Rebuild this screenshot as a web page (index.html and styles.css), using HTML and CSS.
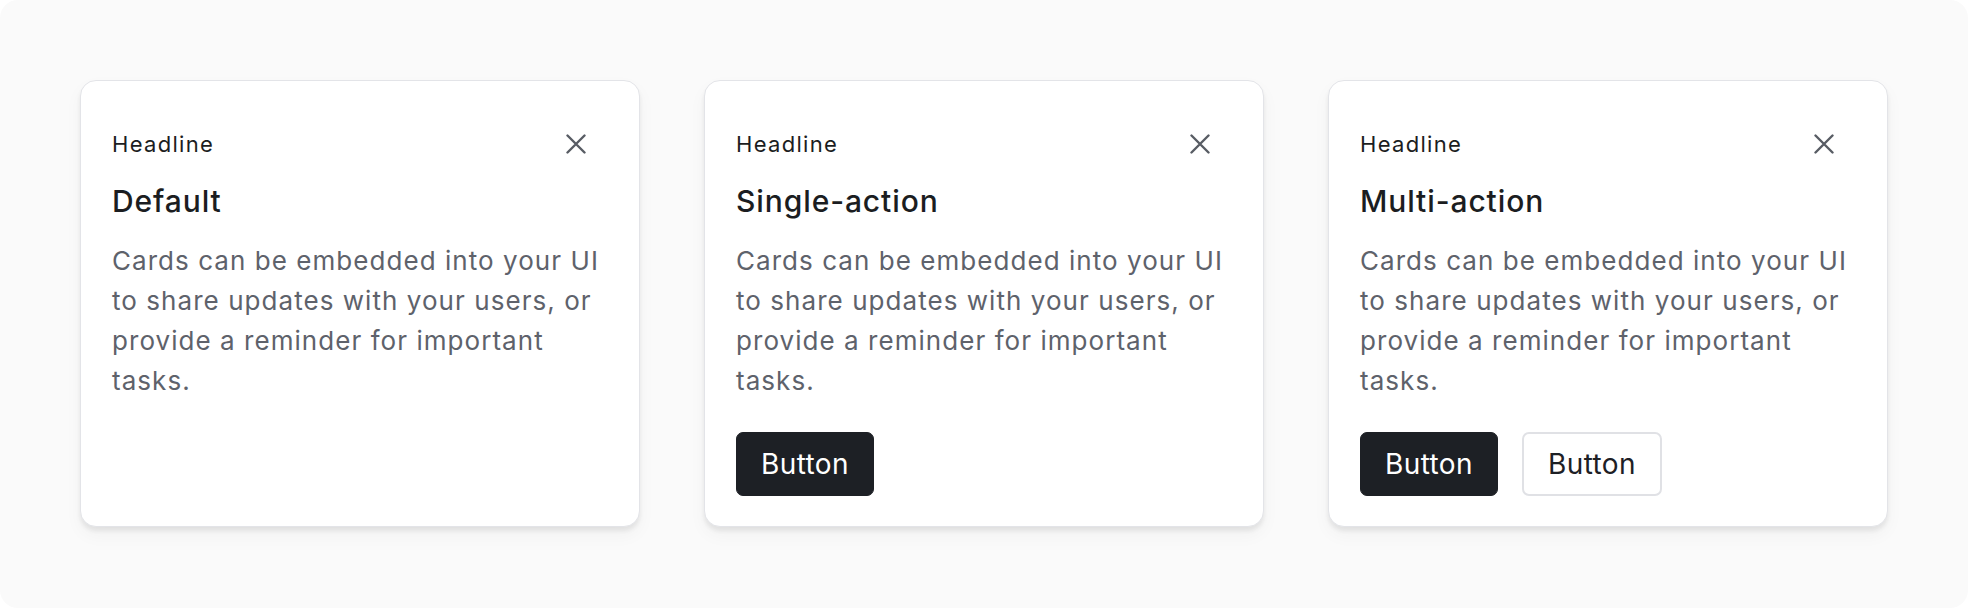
FILE: index.html
```html
<!DOCTYPE html>
<html lang="en">
<head>
<meta charset="utf-8">
<title>Cards</title>
<link rel="stylesheet" href="styles.css">
</head>
<body>
<main class="canvas">
  <section class="card">
    <div class="card-header">
      <span class="eyebrow">Headline</span>
      <button class="close" aria-label="Close">
        <svg viewBox="0 0 20 20" width="20" height="20"><path d="M1.5 1.5 L18.5 18.5 M18.5 1.5 L1.5 18.5" stroke="currentColor" stroke-width="2.4" stroke-linecap="round" fill="none"/></svg>
      </button>
    </div>
    <h2 class="title">Default</h2>
    <p class="body">Cards can be embedded into your UI to share updates with your users, or provide a reminder for important tasks.</p>
  </section>
  <section class="card">
    <div class="card-header">
      <span class="eyebrow">Headline</span>
      <button class="close" aria-label="Close">
        <svg viewBox="0 0 20 20" width="20" height="20"><path d="M1.5 1.5 L18.5 18.5 M18.5 1.5 L1.5 18.5" stroke="currentColor" stroke-width="2.4" stroke-linecap="round" fill="none"/></svg>
      </button>
    </div>
    <h2 class="title">Single-action</h2>
    <p class="body">Cards can be embedded into your UI to share updates with your users, or provide a reminder for important tasks.</p>
    <div class="actions">
      <button class="btn btn-primary">Button</button>
    </div>
  </section>
  <section class="card">
    <div class="card-header">
      <span class="eyebrow">Headline</span>
      <button class="close" aria-label="Close">
        <svg viewBox="0 0 20 20" width="20" height="20"><path d="M1.5 1.5 L18.5 18.5 M18.5 1.5 L1.5 18.5" stroke="currentColor" stroke-width="2.4" stroke-linecap="round" fill="none"/></svg>
      </button>
    </div>
    <h2 class="title">Multi-action</h2>
    <p class="body">Cards can be embedded into your UI to share updates with your users, or provide a reminder for important tasks.</p>
    <div class="actions">
      <button class="btn btn-primary">Button</button>
      <button class="btn btn-secondary">Button</button>
    </div>
  </section>
</main>
</body>
</html>
```
FILE: styles.css
```css
* { box-sizing: border-box; }
html, body {
  margin: 0;
  padding: 0;
  background: #ffffff;
}
body {
  font-family: Inter, "Noto Sans", sans-serif;
  color: #1b1d21;
}
.canvas {
  width: 1968px;
  height: 608px;
  background: #fafafa;
  border-radius: 18px;
  padding: 80px;
  display: flex;
  align-items: flex-start;
  gap: 64px;
}
.card {
  flex: 0 0 560px;
  height: 447px;
  background: #ffffff;
  border: 1px solid #e3e4e8;
  border-radius: 16px;
  padding: 31px;
  box-shadow: 0 4px 4px rgba(0, 0, 0, 0.07), 0 8px 18px rgba(0, 0, 0, 0.04);
  display: flex;
  flex-direction: column;
}
.card-header {
  height: 64px;
  display: flex;
  align-items: center;
  justify-content: space-between;
}
.eyebrow {
  font-size: 22px;
  line-height: 28px;
  font-weight: 400;
  letter-spacing: 1.3px;
  color: #1b1d21;
}
.close {
  width: 64px;
  height: 64px;
  padding: 0;
  border: 0;
  background: transparent;
  color: #585c64;
  display: flex;
  align-items: center;
  justify-content: center;
}
.close svg { display: block; }
.title {
  margin: 7px 0 0;
  font-size: 30px;
  line-height: 36px;
  font-weight: 500;
  letter-spacing: 0.9px;
  color: #1b1d21;
}
.body {
  margin: 22px 0 0;
  font-size: 26px;
  line-height: 40px;
  letter-spacing: 1.05px;
  color: #5e626b;
  font-weight: 400;
}
.actions {
  margin-top: 31px;
  display: flex;
  gap: 24px;
}
.btn {
  height: 64px;
  padding: 0 24px;
  border-radius: 7px;
  font-family: Inter, "Noto Sans", sans-serif;
  font-size: 28px;
  font-weight: 400;
  letter-spacing: 0.4px;
  line-height: 1;
}
.btn-primary {
  background: #1d2025;
  color: #ffffff;
  border: 1px solid #1d2025;
}
.btn-secondary {
  background: #ffffff;
  color: #1d2025;
  border: 2px solid #e0e1e5;
}
```
